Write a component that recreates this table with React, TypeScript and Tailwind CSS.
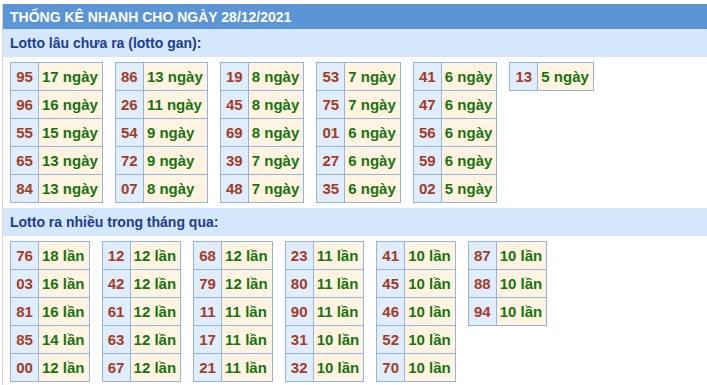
const gan: [string, string][][] = [
  [["95", "17"], ["96", "16"], ["55", "15"], ["65", "13"], ["84", "13"]],
  [["86", "13"], ["26", "11"], ["54", "9"], ["72", "9"], ["07", "8"]],
  [["19", "8"], ["45", "8"], ["69", "8"], ["39", "7"], ["48", "7"]],
  [["53", "7"], ["75", "7"], ["01", "6"], ["27", "6"], ["35", "6"]],
  [["41", "6"], ["47", "6"], ["56", "6"], ["59", "6"], ["02", "5"]],
  [["13", "5"]],
];

const nhieu: [string, string][][] = [
  [["76", "18"], ["03", "16"], ["81", "16"], ["85", "14"], ["00", "12"]],
  [["12", "12"], ["42", "12"], ["61", "12"], ["63", "12"], ["67", "12"]],
  [["68", "12"], ["79", "12"], ["11", "11"], ["17", "11"], ["21", "11"]],
  [["23", "11"], ["80", "11"], ["90", "11"], ["31", "10"], ["32", "10"]],
  [["41", "10"], ["45", "10"], ["46", "10"], ["52", "10"], ["70", "10"]],
  [["87", "10"], ["88", "10"], ["94", "10"]],
];

function StatTable({ rows, unit }: { rows: [string, string][]; unit: string }) {
  return (
    <table className="border-collapse">
      <tbody>
        {rows.map(([num, count]) => (
          <tr key={num}>
            <td className="h-[28px] w-[28px] p-0 border border-[#96b4e2] bg-[#e0edfc] text-center text-[#a43c24]">
              {num}
            </td>
            <td className="h-[28px] py-0 pl-[3px] pr-[4px] border border-[#96b4e2] bg-[#fff4e2] text-[#16740e] whitespace-nowrap">
              {count} {unit}
            </td>
          </tr>
        ))}
      </tbody>
    </table>
  );
}

function Section({ title, groups, unit }: { title: string; groups: [string, string][][]; unit: string }) {
  return (
    <div>
      <div className="h-[28px] bg-[#d4e7fb] pl-[7px] text-[14px] leading-[28px] font-bold text-[#1b3d93]">
        {title}
      </div>
      <div className="flex items-start gap-3 pl-[7px] pt-[5px] pb-[5px] text-[15px] font-bold leading-none">
        {groups.map((g, i) => (
          <StatTable key={i} rows={g} unit={unit} />
        ))}
      </div>
    </div>
  );
}

export default function App() {
  return (
    <div className="bg-white pt-1 pl-[2px]" style={{ fontFamily: '"Liberation Sans", Arial, sans-serif' }}>
      <div className="border-l border-[#d6d6d6]">
        <div className="h-[25px] bg-[#5b95d5] pl-[7px] pt-[1px] text-[14px] leading-[25px] font-bold text-white">
          THỐNG KÊ NHANH CHO NGÀY 28/12/2021
        </div>
        <Section title="Lotto lâu chưa ra (lotto gan):" groups={gan} unit="ngày" />
        <Section title="Lotto ra nhiều trong tháng qua:" groups={nhieu} unit="lần" />
      </div>
    </div>
  );
}
